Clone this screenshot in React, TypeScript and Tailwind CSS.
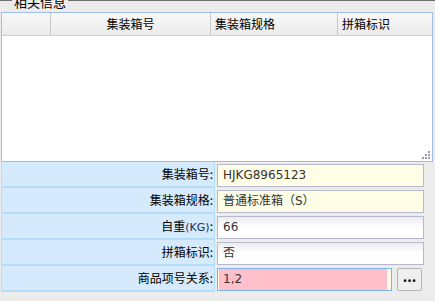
import React from "react";

const cjk = "font-['Noto_Sans_CJK_SC','Noto_Sans',sans-serif]";
const latin = "font-['DejaVu_Sans','Noto_Sans_CJK_SC',sans-serif]";

interface Field {
  label: React.ReactNode;
  value: string;
  tone: "yellow" | "white" | "pink";
}

const fields: Field[] = [
  { label: "集装箱号:", value: "HJKG8965123", tone: "yellow" },
  { label: "集装箱规格:", value: "普通标准箱（S）", tone: "yellow" },
  {
    label: (
      <>
        自重<span className={latin + " text-[11px] text-[#1a2a5a]"}>(KG)</span>:
      </>
    ),
    value: "66",
    tone: "white",
  },
  { label: "拼箱标识:", value: "否", tone: "white" },
  { label: "商品项号关系:", value: "1,2", tone: "pink" },
];

function ResizeGrip() {
  return (
    <svg width="9" height="9" viewBox="0 0 9 9" className="absolute right-[1px] bottom-[1px]">
      <rect x="6" y="0" width="2" height="2" fill="#9aa0a8" />
      <rect x="3" y="3" width="2" height="2" fill="#9aa0a8" />
      <rect x="6" y="3" width="2" height="2" fill="#9aa0a8" />
      <rect x="0" y="6" width="2" height="2" fill="#9aa0a8" />
      <rect x="3" y="6" width="2" height="2" fill="#9aa0a8" />
      <rect x="6" y="6" width="2" height="2" fill="#9aa0a8" />
    </svg>
  );
}

function FieldInput({ field }: { field: Field }) {
  if (field.tone === "pink") {
    return (
      <div className="flex items-center gap-[5px] ml-[2px]">
        <div className="w-[175px] h-[23px] border border-[#7fb2e5] bg-[#fffde6] flex px-[1px]">
          <div className={latin + " flex-1 mr-[3px] bg-[#ffc0cb] text-[12px] text-[#333] leading-[21px] pl-[4px]"}>
            {field.value}
          </div>
        </div>
        <button className="w-[25px] h-[23px] border border-[#b5b5b5] rounded-[2px] bg-[#efefef] text-[14px] font-bold leading-[14px] text-[#111] pb-[6px]">
          ...
        </button>
      </div>
    );
  }
  const bg =
    field.tone === "yellow"
      ? "bg-[#fffde6]"
      : "bg-gradient-to-b from-[#ececf0] via-white to-white";
  return (
    <div
      className={
        latin +
        " ml-[2px] w-[207px] h-[23px] border border-[#b6b9cc] px-[5px] text-[12px] leading-[21px] text-[#333] " +
        bg
      }
    >
      {field.value}
    </div>
  );
}

export default function App() {
  return (
    <div className={cjk + " relative w-[435px] h-[301px] bg-[#ececec] overflow-hidden text-black"}>
      {/* fieldset top border + legend */}
      <div className="h-[1px] bg-[#6f6f6f]" />
      <div className="absolute left-[12px] top-[-5px] px-[2px] bg-[#ececec] text-[13px] leading-[13px]">
        相关信息
      </div>

      {/* grid */}
      <div className="relative mt-[11px] ml-[1px] w-[432px] h-[150px] border border-[#9fbde6] bg-white">
        <div className="flex h-[23px] bg-gradient-to-b from-[#f8f8f8] to-[#ebebeb] border-b border-[#cfcfcf] text-[12px] leading-[22px]">
          <div className="w-[49px] border-r border-[#c8c8c8]" />
          <div className="w-[160px] border-r border-[#c8c8c8] text-center">集装箱号</div>
          <div className="w-[127px] border-r border-[#c8c8c8] pl-[4px]">集装箱规格</div>
          <div className="flex-1 pl-[4px]">拼箱标识</div>
        </div>
        <ResizeGrip />
      </div>

      {/* form */}
      <div className="ml-[1px] w-[214px] flex flex-col" style={{ width: "auto" }}>
        {fields.map((f, i) => (
          <div key={i} className="flex items-center h-[26px]">
            <div className="w-[214px] h-[26px] bg-[#d5ebfd] border-x border-b-2 border-[#b3ddfb] text-[12px] text-right pr-[1px] leading-[24px]">
              {f.label}
            </div>
            <FieldInput field={f} />
          </div>
        ))}
      </div>
    </div>
  );
}
